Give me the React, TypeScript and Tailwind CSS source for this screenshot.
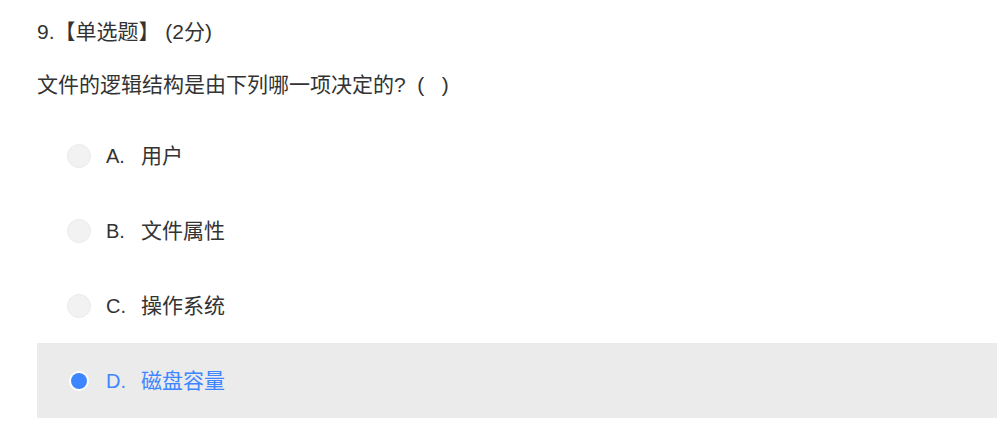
import React from "react";

const options = [
  { key: "A.", text: "用户", selected: false },
  { key: "B.", text: "文件属性", selected: false },
  { key: "C.", text: "操作系统", selected: false },
  { key: "D.", text: "磁盘容量", selected: true },
];

export default function App() {
  return (
    <div
      className="w-[1008px] h-[421px] bg-white text-[#333333] overflow-hidden"
      style={{ fontFamily: '"Liberation Sans", Arial, "Noto Sans CJK SC", sans-serif' }}
    >
      <div className="pl-[37px] pr-[11px]">
        <div className="h-[64px] pt-[20px] text-[21px] leading-[24px]">
          9.【单选题】 (2分)
        </div>
        <div className="text-[21px] leading-[24px] pt-[9px] h-[54px] whitespace-pre">
          {"文件的逻辑结构是由下列哪一项决定的?\u00a0\u00a0(\u00a0\u00a0\u00a0)"}
        </div>
        <div className="flex flex-col">
          {options.map((o) => (
            <div
              key={o.key}
              className={
                "h-[75px] flex items-center pl-[30px] " +
                (o.selected ? "bg-[#ebebeb]" : "")
              }
            >
              {o.selected ? (
                <div className="w-[24px] h-[24px] flex items-center justify-center">
                  <div className="w-[20px] h-[20px] rounded-full bg-white flex items-center justify-center">
                    <div className="w-[16px] h-[16px] rounded-full bg-[#3d86ff]" />
                  </div>
                </div>
              ) : (
                <div className="w-[24px] h-[24px] rounded-full bg-[#f2f2f2] border border-[#ebebeb]" />
              )}
              <span
                className={
                  "ml-[15px] w-[35px] text-[20px] leading-[24px] " +
                  (o.selected ? "text-[#3d86ff]" : "text-[#333333]")
                }
              >
                {o.key}
              </span>
              <span
                className={
                  "text-[21px] leading-[24px] " +
                  (o.selected ? "text-[#3d86ff]" : "text-[#333333]")
                }
              >
                {o.text}
              </span>
            </div>
          ))}
        </div>
      </div>
    </div>
  );
}
